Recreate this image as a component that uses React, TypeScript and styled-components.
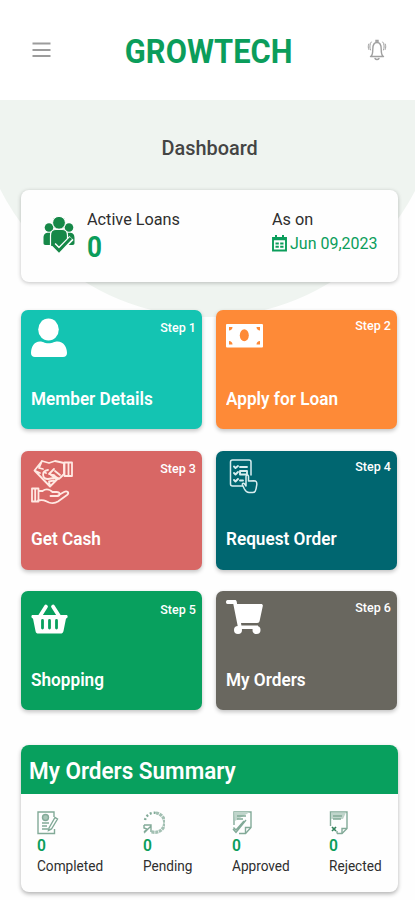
import React from "react";
import styled, { createGlobalStyle } from "styled-components";

const green = "#0b9d5b";

const GlobalStyle = createGlobalStyle`
  *, *::before, *::after { box-sizing: border-box; }
  body { margin: 0; background: #fefefe; font-family: Roboto, "Liberation Sans", sans-serif; }
  svg { display: block; flex: none; }
`;

const Screen = styled.div`
  width: 415px;
  height: 900px;
  overflow: hidden;
  background: #fefefe;
`;

const Text = styled.div<{ $size: number; $line: number; $weight?: number; $color?: string; $squeeze?: number; $origin?: string }>`
  margin: 0;
  font-size: ${(p) => p.$size}px;
  line-height: ${(p) => p.$line}px;
  font-weight: ${(p) => p.$weight ?? 400};
  color: ${(p) => p.$color ?? "#2e2e2e"};
  white-space: nowrap;
  transform: scaleX(${(p) => p.$squeeze ?? 0.94});
  transform-origin: ${(p) => p.$origin ?? "left"} center;
`;

const Header = styled.header`
  display: grid;
  grid-template-columns: 40px 1fr 40px;
  align-items: center;
  justify-items: center;
  height: 100px;
  padding: 0 18px 0 21px;
  background: #fff;
`;

const Brand = styled.div`
  padding-top: 3px;
`;

const Main = styled.main`
  position: relative;
  padding: 36px 17.5px 0 21px;
  isolation: isolate;
`;

const Backdrop = styled.div`
  position: absolute;
  inset: 0 0 auto 0;
  height: 217px;
  overflow: hidden;
  z-index: -1;
  &::before {
    content: "";
    position: absolute;
    left: -25px;
    bottom: 0;
    width: 466px;
    height: 466px;
    border-radius: 50%;
    background: #eff4f0;
  }
`;

const Title = styled.div`
  display: flex;
  justify-content: center;
  height: 54px;
`;

const LoanCard = styled.section`
  display: flex;
  height: 91.5px;
  padding: 19px 0 0 21.5px;
  border-radius: 8px;
  background: #fefefe;
  box-shadow: 0 1px 4px rgba(0, 0, 0, 0.24);
`;

const LoanIcon = styled.div`
  width: 44px;
  padding-top: 7px;
`;

const LoanColumn = styled.div<{ $width: number }>`
  width: ${(p) => p.$width}px;
`;

const DateRow = styled.div`
  display: flex;
  align-items: center;
  gap: 2.5px;
  height: 27px;
`;

const TileGrid = styled.div`
  display: grid;
  grid-template-columns: 181px 181px;
  column-gap: 14px;
  row-gap: 21.5px;
  margin-top: 28.5px;
`;

const Tile = styled.section<{ $bg: string }>`
  display: flex;
  flex-direction: column;
  justify-content: space-between;
  height: 119px;
  padding: 0 6px 19.5px 10px;
  border-radius: 7px;
  background: ${(p) => p.$bg};
  box-shadow: 0 2px 4px rgba(0, 0, 0, 0.24);
`;

const TileTop = styled.div`
  display: flex;
  justify-content: space-between;
  align-items: flex-start;
`;

const Step = styled.div<{ $top: number }>`
  padding-top: ${(p) => p.$top}px;
`;

const Summary = styled.section`
  height: 147.5px;
  margin-top: 34.5px;
  border-radius: 8px;
  overflow: hidden;
  background: #fefefe;
  box-shadow: 0 2px 4px rgba(0, 0, 0, 0.3);
`;

const SummaryHeader = styled.div`
  height: 49px;
  padding: 11px 8px 0;
  background: #08a05e;
`;

const SummaryRow = styled.div`
  display: grid;
  grid-template-columns: 105.5px 89px 97.5px 1fr;
  padding: 17px 0 0 16px;
`;

const Stat = styled.div`
  display: flex;
  flex-direction: column;
`;

const MenuIcon = () => (
  <svg width="19" height="16" viewBox="0 0 19 16" stroke="#9c9c9c" strokeWidth="2">
    <path d="M.5 1.500h18M.5 8h18M.5 14h18" />
  </svg>
);

const BellIcon = () => (
  <svg width="20" height="22" viewBox="0 0 20 22" fill="none" stroke="#a0a0a0" strokeWidth="1.4" strokeLinecap="round">
    <path d="M9 3.200V1.500h2v1.700M3.500 17.500h13M4 17.300c1.700-1.500 1.800-3.500 1.800-7.300C5.800 6 7.300 3.500 10 3.500s4.200 2.500 4.200 6.500c0 3.800.1 5.800 1.800 7.300M8 19.500c1 1.400 3 1.400 4 0" />
    <path d="M4.200 3C2.500 4.800 2.500 9 3.500 11M1.800 5c-.8 1.800-.7 4 0 5.500M15.800 3c1.700 1.800 1.700 6 .7 8M18.200 5c.8 1.800.7 4 0 5.500" strokeWidth="1" />
  </svg>
);

const GroupIcon = () => (
  <svg width="32" height="38" viewBox="0 0 32 38" fill="#168848">
    <circle cx="6" cy="11.500" r="4.300" />
    <circle cx="26" cy="11.500" r="4.300" />
    <path d="M.5 22c0-4 2-5.300 5-5.300h3.500V29H2.500c-1.500 0-2-1-2-2ZM31.500 22c0-4-2-5.300-5-5.300H23V29h6.500c1.500 0 2-1 2-2Z" />
    <circle cx="16" cy="6.800" r="6.400" stroke="#fefefe" strokeWidth="1" />
    <path d="M7.500 19.500c0-4.500 2.500-6 5.500-6h6c3 0 5.500 1.500 5.500 6V30c-3 2.500-14 2.500-17 0Z" stroke="#fefefe" strokeWidth="1.200" />
    <path d="m10.500 29 5.500 5.500L28.500 22" fill="none" stroke="#fefefe" strokeWidth="6" />
    <path d="m10 28.500 6 6L28 22" fill="none" stroke="#168848" strokeWidth="3" />
  </svg>
);

const CalendarIcon = () => (
  <svg width="15" height="17" viewBox="0 0 15 17" fill="none" stroke={green}>
    <path d="M1 3h13v12.500H1z" strokeWidth="1.900" />
    <path d="M1 4h13" strokeWidth="2.500" />
    <path d="M4 0v4M11 0v4" strokeWidth="2" />
    <path d="M3.500 8.500h3.300M8.200 8.500h3.300M3.500 11.700h3.300M8.200 11.700h3.300" strokeWidth="2" />
  </svg>
);

const UserIcon = () => (
  <svg width="36" height="48" viewBox="0 0 36 48" fill="#fff">
    <ellipse cx="17.500" cy="19.500" rx="10.300" ry="11" />
    <path d="M0 43c0-6 3-11.500 9-11.500 3 0 4 1.700 8.500 1.700s6-1.700 9-1.700c6 0 9.500 5.500 9.500 11.500 0 2.500-1.500 4-4 4H4c-2.500 0-4-1.500-4-4Z" />
  </svg>
);

const MoneyIcon = () => (
  <svg width="37" height="38" viewBox="0 0 37 38" fill="#fff">
    <rect y="14" width="37" height="23.500" rx="1" />
    <g fill="#fe8a37">
      <ellipse cx="18.300" cy="25.300" rx="4.500" ry="6" />
      <path d="M3 17h3.500c0 2-1.500 3.500-3.500 3.500ZM34 17h-3.500c0 2 1.500 3.500 3.500 3.500ZM3 34.500h3.500c0-2-1.500-3.500-3.500-3.500ZM34 34.500h-3.500c0-2 1.500-3.500 3.500-3.500Z" />
    </g>
  </svg>
);

const CashIcon = () => (
  <svg width="43" height="54" viewBox="0 0 43 54" fill="none" stroke="#ffe9e3" strokeWidth="1.800" strokeLinejoin="round" strokeLinecap="round">
    <path d="M11 10 3.500 19.500 19 35.500l8-8M11 10l7 2 6-2 9 2v11l-4 4-4 1-6-5M11 10l-3 7 4 1M3.500 19.500 9 22M19 35.500l-1-5 5-1" />
    <path d="M17 19c-7 1-6 9 0 9l6-1c2-1 1-3-1-3l-4-1 5-5M15 22l-2-1M24 20l5 4M22 24l6 4" />
    <path d="M33.500 11.500H41V25h-7.500zM37.500 12v13" />
    <path d="M1 37.500h6.500v13H1zM4.200 38v12M7.500 40h4c4-3 8-1 10 1h4c4 0 4 4 1 4h-7M27 44.500l6-3.500c3-1.500 6 .5 3 3l-9 6.500c-3 2-6 2-9 1-4-2-6-3-11-2" />
  </svg>
);

const OrderIcon = () => (
  <svg width="42" height="44" viewBox="0 0 42 44" fill="none" stroke="#d9edef" strokeWidth="1.500" strokeLinejoin="round" strokeLinecap="round">
    <path d="M17 35H6.500c-1.500 0-2-.5-2-2V11c0-1.500.5-2 2-2H23c1.500 0 2 .5 2 2v13" />
    <path d="m8 15.500 1.500 1.500 2.500-2M14 16h7M8 22l1.500 1.500L12 21M14 20h7v3.500h-7zM8 29l1.500 1.500L12 28M14 29.500h3" strokeWidth="1.900" />
    <path d="M20 35V25.500c0-2 2.500-2 2.500 0V30l5.500-.3c2 0 3 1.300 2.800 4l-.7 4c-.4 2.500-1.500 3.800-3.500 3.800H23c-2 0-3.500-1.500-4.600-3.500L16.500 34c-.5-1.500.8-2.200 2-1.200Z" fill="#006670" />
  </svg>
);

const BasketIcon = () => (
  <svg width="37" height="44" viewBox="0 0 37 44" fill="none">
    <path d="m9 25 6-9.500M28 25l-6-9.500" stroke="#fff" strokeWidth="3.800" strokeLinecap="round" />
    <path d="M1.500 24h34c1.500 0 1.700 3-.5 3.500L32.500 40c-.4 2-1.500 2.500-3 2.500h-22c-1.700 0-2.700-.6-3-2.500L2 27.500C0 27 0 24 1.500 24Z" fill="#fff" />
    <path d="M11.500 29.500V37M18.500 29.500V37M25.500 29.500V37" stroke="#08a05e" strokeWidth="2.800" strokeLinecap="round" />
  </svg>
);

const CartIcon = () => (
  <svg width="37" height="44" viewBox="0 0 37 44" fill="#fff">
    <path d="M1.500 9h7.500c1 0 1.500.6 1.700 1.500l.4 2.500H35c1.400 0 2 .8 1.800 2l-3.200 15c-.3 1.300-1 2-2.500 2H15l.4 2.500H32v3.500H12.300L7.300 13H1.500C-.5 13-.5 9 1.500 9Z" />
    <circle cx="12" cy="39" r="4" />
    <circle cx="30.500" cy="39" r="4" />
  </svg>
);

const statIcon = { width: 22, height: 24, viewBox: "0 0 22 24", fill: "none", stroke: "#82aa98", strokeWidth: 1.4 };

const CompletedIcon = () => (
  <svg {...statIcon}>
    <path d="M17 6V1H1v21.500h16.500V18" />
    <circle cx="8.500" cy="6.500" r="3" fill="#a9c6b8" />
    <path d="M5 12h7M5 15h5M5 18h6M12 17l6-10.500 2.500 1.500-6 10-3 1.500Z" />
  </svg>
);

const PendingIcon = () => (
  <svg {...statIcon}>
    <path d="M2 9A9.300 9.300 0 0 1 13 2" strokeWidth="2.400" strokeDasharray="2 2" />
    <path d="M13 2a9.700 9.700 0 1 1-5 18.500" strokeWidth="3.200" strokeDasharray="3 .7" stroke="#a3c0b3" />
    <path d="M1 14h7v7M1 22l7-7M1 14v3l3 1-3 3" />
  </svg>
);

const ApprovedIcon = () => (
  <svg {...statIcon}>
    <path d="M2 14V1h17v15.500L13.500 22.500H7" />
    <path d="M2 1h16L3 10Z" fill="#c0d5cb" stroke="none" />
    <path d="M5 5h9M5 8h6M1 18l3 3.500L14 9M1.500 16.500 4 19l8-9M19 16.500h-5.500v6" />
  </svg>
);

const RejectedIcon = () => (
  <svg {...statIcon}>
    <path d="M1.500 15V1H18v16.500L13 22.500H8" />
    <path d="M2 1.500h15L14 8H2Z" fill="#c0d5cb" stroke="none" />
    <path d="M4 5h9M4 8h8M18 17.500h-5v5M8 20v2.500" />
    <path d="m3 16 4 4M7 16l-4 4" stroke="#34825d" strokeWidth="1.700" />
  </svg>
);

const tiles = [
  { title: "Member Details", bg: "#14c4b2", Icon: UserIcon, top: 10 },
  { title: "Apply for Loan", bg: "#fe8a37", Icon: MoneyIcon, top: 8 },
  { title: "Get Cash", bg: "#d86765", Icon: CashIcon, top: 10.5 },
  { title: "Request Order", bg: "#006670", Icon: OrderIcon, top: 8.5 },
  { title: "Shopping", bg: "#08a05e", Icon: BasketIcon, top: 10.5 },
  { title: "My Orders", bg: "#69675f", Icon: CartIcon, top: 8.5 },
];

const stats = [
  { label: "Completed", Icon: CompletedIcon },
  { label: "Pending", Icon: PendingIcon },
  { label: "Approved", Icon: ApprovedIcon },
  { label: "Rejected", Icon: RejectedIcon },
];

export default function App() {
  return (
    <Screen>
      <GlobalStyle />
      <Header>
        <MenuIcon />
        <Brand>
          <Text as="h1" $size={33} $line={38} $weight={700} $color={green} $squeeze={0.935} $origin="center">GROWTECH</Text>
        </Brand>
        <BellIcon />
      </Header>
      <Main>
        <Backdrop />
        <Title>
          <Text as="h2" $size={20.5} $line={24} $weight={500} $color="#444" $squeeze={0.97} $origin="center">Dashboard</Text>
        </Title>
        <LoanCard>
          <LoanIcon><GroupIcon /></LoanIcon>
          <LoanColumn $width={185.5}>
            <Text $size={17.3} $line={21}>Active Loans</Text>
            <Text $size={29} $line={34} $weight={700} $color={green} $squeeze={0.9}>0</Text>
          </LoanColumn>
          <LoanColumn $width={110}>
            <Text $size={17.3} $line={21}>As on</Text>
            <DateRow>
              <CalendarIcon />
              <Text $size={17.3} $line={21} $color={green} $squeeze={0.925}>Jun 09,2023</Text>
            </DateRow>
          </LoanColumn>
        </LoanCard>
        <TileGrid>
          {tiles.map(({ title, bg, Icon, top }, i) => (
            <Tile key={title} $bg={bg}>
              <TileTop>
                <Icon />
                <Step $top={top}>
                  <Text $size={13.3} $line={16} $weight={500} $color="#fff" $origin="right">Step {i + 1}</Text>
                </Step>
              </TileTop>
              <Text $size={18.3} $line={22} $weight={600} $color="#fff">{title}</Text>
            </Tile>
          ))}
        </TileGrid>
        <Summary>
          <SummaryHeader>
            <Text $size={23.5} $line={30} $weight={600} $color="#fff" $squeeze={0.957}>My Orders Summary</Text>
          </SummaryHeader>
          <SummaryRow>
            {stats.map(({ label, Icon }) => (
              <Stat key={label}>
                <Icon />
                <Text $size={17} $line={21} $weight={600} $color={green} $squeeze={0.92}>0</Text>
                <Text $size={14.5} $line={21}>{label}</Text>
              </Stat>
            ))}
          </SummaryRow>
        </Summary>
      </Main>
    </Screen>
  );
}
